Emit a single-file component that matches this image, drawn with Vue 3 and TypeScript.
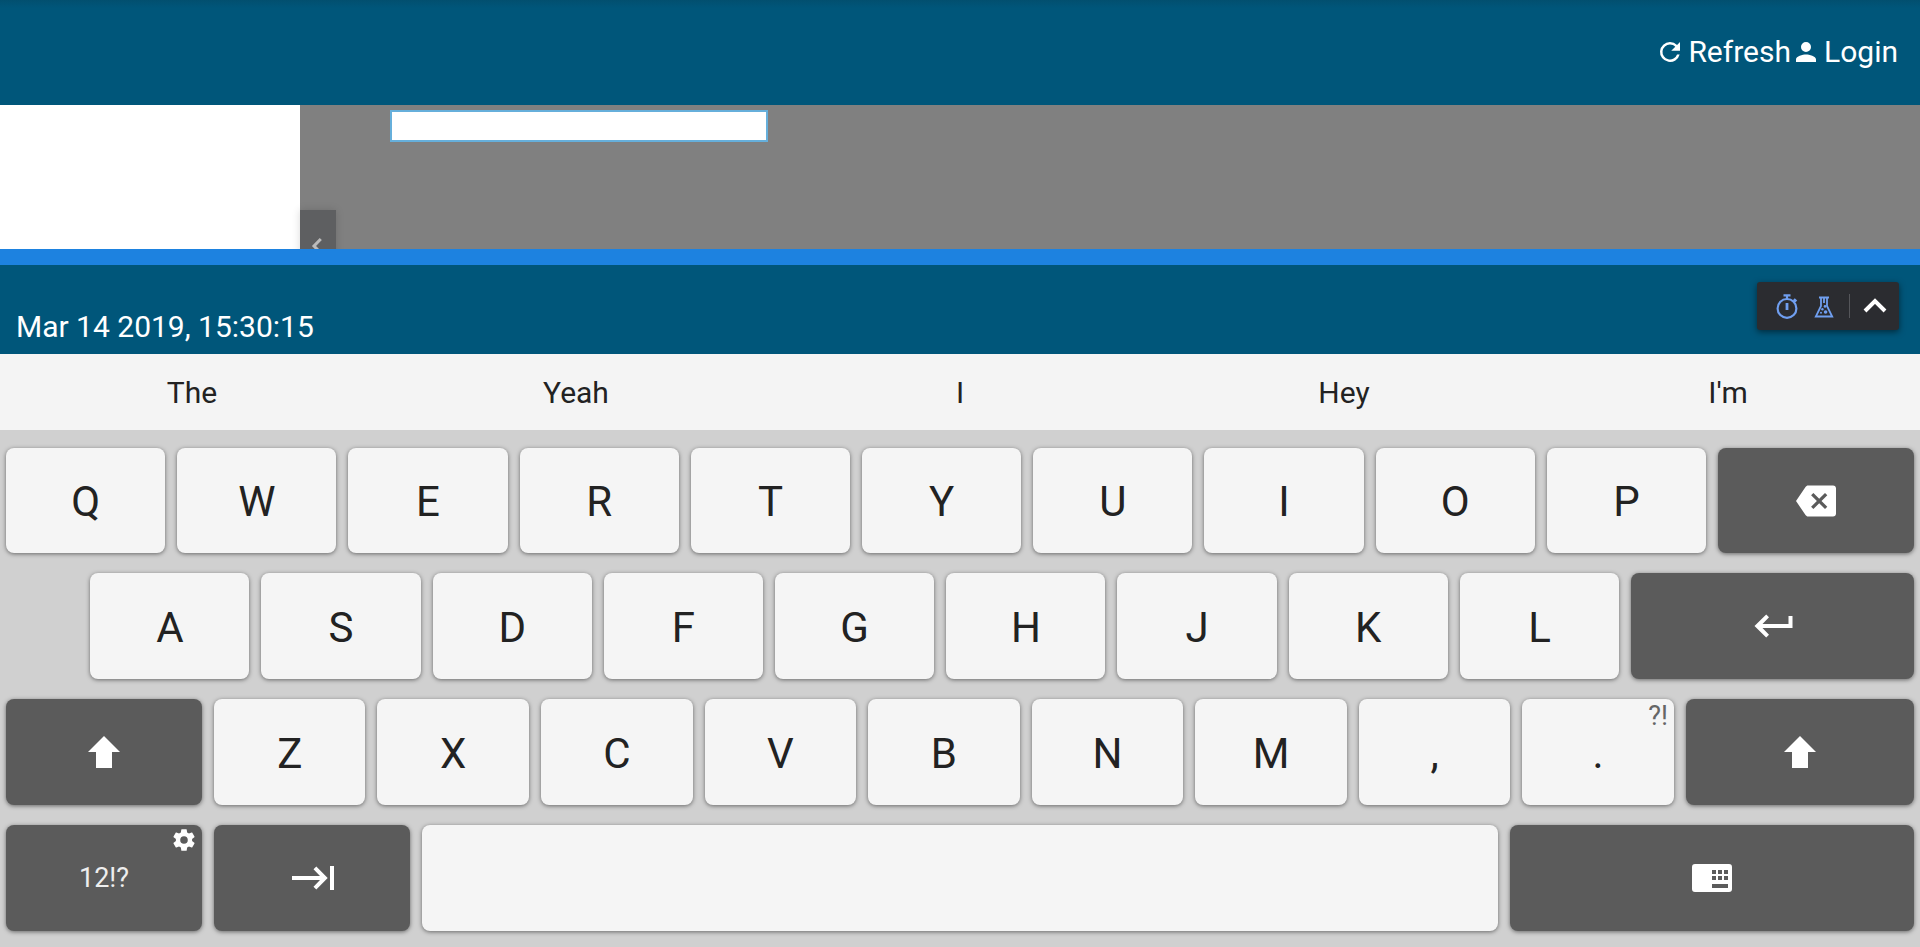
<script setup lang="ts">
import { ref } from 'vue'

type Icon = 'backspace' | 'enter' | 'shift' | 'tab' | 'hide'

interface Key {
  id: string
  weight: number
  label?: string
  icon?: Icon
  name?: string
  dark?: boolean
  spacer?: boolean
  hint?: string
  gear?: boolean
}

const letters = (text: string, weight: number): Key[] =>
  [...text].map((label) => ({ id: label, label, weight }))

const rows: Key[][] = [
  [
    ...letters('QWERTYUIOP', 130),
    { id: 'backspace', icon: 'backspace', name: 'Backspace', weight: 160, dark: true },
  ],
  [
    { id: 'indent', weight: 59, spacer: true },
    ...letters('ASDFGHJKL', 130),
    { id: 'enter', icon: 'enter', name: 'Enter', weight: 231, dark: true },
  ],
  [
    { id: 'shift-left', icon: 'shift', name: 'Shift', weight: 640, dark: true },
    ...letters('ZXCVBNM,', 495),
    { id: '.', label: '.', weight: 495, hint: '?!' },
    { id: 'shift-right', icon: 'shift', name: 'Shift', weight: 745, dark: true },
  ],
  [
    { id: 'symbols', label: '12!?', weight: 196, dark: true, gear: true },
    { id: 'tab', icon: 'tab', name: 'Tab', weight: 196, dark: true },
    { id: 'space', name: 'Space', weight: 1076 },
    { id: 'hide', icon: 'hide', name: 'Hide keyboard', weight: 404, dark: true },
  ],
]

const suggestions = ['The', 'Yeah', 'I', 'Hey', "I'm"]
const query = ref('')

const type = (key: Key) => {
  if (key.id === 'space') query.value += ' '
  else if (key.id === 'backspace') query.value = query.value.slice(0, -1)
  else if (key.label && !key.dark) query.value += key.label
}
</script>

<template>
  <div class="screen">
    <header class="top">
      <a href="#refresh" class="action">
        <svg viewBox="0 0 24 24" aria-hidden="true">
          <path d="M17.65 6.35A7.96 7.96 0 0 0 12 4a8 8 0 1 0 7.73 10h-2.08A6 6 0 1 1 12 6c1.66 0 3.14.69 4.22 1.78L13 11h7V4z" />
        </svg>
        <span>Refresh</span>
      </a>
      <a href="#login" class="action">
        <svg viewBox="0 0 24 24" aria-hidden="true">
          <path d="M12 12a4 4 0 1 0 0-8 4 4 0 0 0 0 8zm0 2c-2.67 0-8 1.34-8 4v2h16v-2c0-2.66-5.33-4-8-4z" />
        </svg>
        <span>Login</span>
      </a>
    </header>

    <main class="content">
      <aside class="side"></aside>
      <button class="collapse" type="button" aria-label="Collapse panel">
        <svg viewBox="0 0 24 24" aria-hidden="true">
          <path d="M14.8 5 8 12l6.8 7" />
        </svg>
      </button>
      <div class="canvas">
        <input v-model="query" class="field" type="text" aria-label="Text" />
      </div>
    </main>

    <footer class="status">
      <time datetime="2019-03-14T15:30:15">Mar 14 2019, 15:30:15</time>
      <div class="tools">
        <button type="button" aria-label="Timer">
          <svg viewBox="0 0 24 28" aria-hidden="true" fill="none" stroke="currentColor" stroke-width="2.2">
            <circle cx="12" cy="16.4" r="9.4" />
            <path d="M8.500 3.400h7M12 4v3M18.500 9.500l2-2M19 7l2.400 2.400" />
            <path d="M12 11v7" stroke-width="2.8" />
          </svg>
        </button>
        <button type="button" aria-label="Experiments">
          <svg viewBox="0 0 24 28" aria-hidden="true" fill="none" stroke="currentColor" stroke-width="1.8">
            <path d="M7 5.500h10M9 6v8L3.800 24.500h16.400L15 14V6M12 6v5" />
            <g fill="currentColor" stroke="none">
              <circle cx="13" cy="14.4" r="1.3" />
              <circle cx="10.4" cy="17.2" r="1.2" />
              <circle cx="13.6" cy="20" r="1.8" />
              <circle cx="9" cy="20.8" r="1" />
            </g>
          </svg>
        </button>
        <span class="divider"></span>
        <button type="button" class="expand" aria-label="Expand">
          <svg viewBox="0 0 24 28" aria-hidden="true" fill="none" stroke="currentColor" stroke-width="4">
            <path d="M2 19 12 9l10 10" />
          </svg>
        </button>
      </div>
    </footer>

    <section class="keyboard">
      <div class="suggestions">
        <button v-for="word in suggestions" :key="word" type="button">{{ word }}</button>
      </div>
      <div class="rows">
        <div v-for="(row, i) in rows" :key="i" class="row">
          <template v-for="key in row" :key="key.id">
            <span v-if="key.spacer" :style="{ flexGrow: key.weight }" class="gap"></span>
            <button
              v-else
              type="button"
              class="key"
              :class="{ dark: key.dark }"
              :style="{ flexGrow: key.weight }"
              :aria-label="key.name"
              @click="type(key)"
            >
              <span v-if="key.label" class="label">{{ key.label }}</span>
              <svg v-if="key.icon === 'backspace'" viewBox="0 0 40 40" aria-hidden="true">
                <path fill-rule="evenodd" d="M37 4.500H12.200c-1.200 0-2.100.6-2.700 1.500L0 20l9.500 14c.6.900 1.500 1.500 2.700 1.500H37c1.800 0 3-1.200 3-3v-25c0-1.800-1.200-3-3-3zM31.300 25.800 29 28.100l-5.800-5.800-5.800 5.800-2.300-2.300 5.800-5.800-5.800-5.800 2.300-2.300 5.800 5.800 5.800-5.800 2.300 2.300-5.800 5.800z" />
              </svg>
              <svg v-else-if="key.icon === 'enter'" class="wide" viewBox="0 0 44 40" aria-hidden="true">
                <path d="M41.500 10v12H11.500l6.500 6.700-2.800 2.800L3.500 20 15.200 8.500l2.800 2.800L11.500 18h26v-8z" />
              </svg>
              <svg v-else-if="key.icon === 'shift'" viewBox="0 0 40 40" aria-hidden="true">
                <path d="M20 4 36 20h-8v16H12V20H4z" />
              </svg>
              <svg v-else-if="key.icon === 'tab'" class="wide" viewBox="0 0 44 40" aria-hidden="true">
                <path d="M2 18h28l-6.500-6.700 2.800-2.800L37.700 20 26.300 31.500l-2.800-2.800L30 22H2zM40 8h4v24h-4z" />
              </svg>
              <svg v-else-if="key.icon === 'hide'" viewBox="0 0 40 40" aria-hidden="true">
                <path fill-rule="evenodd" d="M3 6h34a3 3 0 0 1 3 3v22a3 3 0 0 1-3 3H3a3 3 0 0 1-3-3V9a3 3 0 0 1 3-3zM20 12v4h4v-4zM26 12v4h4v-4zM32 12v4h4v-4zM20 18v4h4v-4zM26 18v4h4v-4zM32 18v4h4v-4zM20 26v4h16v-4z" />
              </svg>
              <span v-if="key.hint" class="hint">{{ key.hint }}</span>
              <svg v-if="key.gear" class="gear" viewBox="0 0 24 24" aria-hidden="true">
                <path d="M19.430 12.980c.04-.32.07-.64.07-.98s-.03-.66-.07-.98l2.110-1.650c.19-.15.24-.42.12-.64l-2-3.460c-.12-.22-.39-.3-.61-.22l-2.490 1c-.52-.4-1.080-.73-1.690-.98l-.38-2.650A.488.488 0 0 0 14 2h-4c-.25 0-.46.18-.49.42l-.38 2.650c-.61.25-1.170.59-1.690.98l-2.490-1c-.23-.09-.49 0-.61.22l-2 3.460c-.13.22-.07.49.12.64l2.110 1.650c-.04.32-.07.65-.07.98s.03.66.07.98l-2.110 1.650c-.19.15-.24.42-.12.64l2 3.460c.12.22.39.3.61.22l2.490-1c.52.4 1.080.73 1.690.98l.38 2.650c.03.24.24.42.49.42h4c.25 0 .46-.18.49-.42l.38-2.650c.61-.25 1.170-.59 1.690-.98l2.490 1c.23.09.49 0 .61-.22l2-3.460c.12-.22.07-.49-.12-.64zM12 15.500a3.500 3.500 0 1 1 0-7 3.500 3.500 0 0 1 0 7z" />
              </svg>
            </button>
          </template>
        </div>
      </div>
    </section>
  </div>
</template>

<style>
body {
  margin: 0;
}
</style>

<style scoped>
.screen {
  display: flex;
  flex-direction: column;
  min-height: 100vh;
  font-family: Roboto, 'Liberation Sans', sans-serif;
  font-size: 30px;
  color: #222;
}

button {
  margin: 0;
  padding: 0;
  border: 0;
  background: none;
  color: inherit;
  font: inherit;
}

.top {
  display: flex;
  align-items: center;
  justify-content: flex-end;
  box-sizing: border-box;
  height: 105px;
  padding: 0 22px 2px 0;
  background: linear-gradient(#024f6f, #00567a 8px);
}

.action {
  display: flex;
  align-items: center;
  gap: 3px;
  color: #fff;
  text-decoration: none;
}

.action svg {
  width: 30px;
  height: 30px;
  fill: currentColor;
}

.content {
  display: flex;
  flex: 1;
  min-height: 144px;
  overflow: hidden;
  background: #808080;
}

.side {
  width: 300px;
  background: #fff;
}

.collapse {
  width: 36px;
  height: 72px;
  margin: 105px 0 -33px;
  background: #5e5f61;
  color: #bbb;
  box-shadow: 0 0 8px rgba(0, 0, 0, 0.15);
}

.collapse svg {
  display: block;
  width: 24px;
  height: 24px;
  margin: 0 auto;
  fill: none;
  stroke: currentColor;
  stroke-width: 3;
}

.canvas {
  flex: 1;
  padding: 5px 0 0 54px;
}

.field {
  display: block;
  box-sizing: border-box;
  width: 378px;
  height: 32px;
  padding: 0 6px;
  border: 2px solid #66afdb;
  background: #fff;
  font: inherit;
  font-size: 20px;
  outline: none;
}

.status {
  display: flex;
  align-items: flex-start;
  justify-content: space-between;
  box-sizing: border-box;
  height: 105px;
  padding: 17px 21px 0 16px;
  border-top: 16px solid #1d82e0;
  background: #00567a;
}

.status time {
  padding-top: 28px;
  color: #fff;
  line-height: 34px;
}

.tools {
  display: flex;
  align-items: center;
  box-sizing: border-box;
  height: 48px;
  padding: 0 12px 0 18px;
  gap: 13px;
  border-radius: 3px;
  background: #2b2c30;
  box-shadow: 0 2px 6px rgba(0, 0, 0, 0.5);
  color: #709ff0;
}

.tools svg {
  display: block;
  width: 24px;
  height: 28px;
}

.divider {
  width: 1px;
  height: 24px;
  background: #55565a;
}

.tools .expand {
  color: #fff;
}

.suggestions {
  display: grid;
  grid-template-columns: repeat(5, 1fr);
  height: 76px;
  background: #f4f4f4;
}

.rows {
  display: flex;
  flex-direction: column;
  gap: 20px;
  padding: 18px 6px 16px;
  background: #d0d0d0;
}

.row {
  display: flex;
  gap: 12px;
  height: 106px;
}

.row:first-child {
  height: 105px;
}

.gap {
  flex: 1 1 0;
}

.key {
  position: relative;
  display: flex;
  flex: 1 1 0;
  align-items: center;
  justify-content: center;
  min-width: 0;
  border-radius: 8px;
  background: #f5f5f5;
  box-shadow: 0 1px 4px rgba(0, 0, 0, 0.5);
  font-size: 42px;
}

.label {
  padding-top: 2px;
}

.key.dark {
  background: #5b5b5b;
  color: #fff;
  font-size: 27px;
}

.key.dark .label {
  padding-top: 0;
  color: #eee;
}

.key svg {
  width: 40px;
  height: 40px;
  fill: currentColor;
}

.key svg.wide {
  width: 44px;
}

.key .hint {
  position: absolute;
  top: 0;
  right: 6px;
  color: #666;
  font-size: 27px;
  line-height: 34px;
}

.key svg.gear {
  position: absolute;
  top: 2px;
  right: 5px;
  width: 26px;
  height: 26px;
}
</style>
